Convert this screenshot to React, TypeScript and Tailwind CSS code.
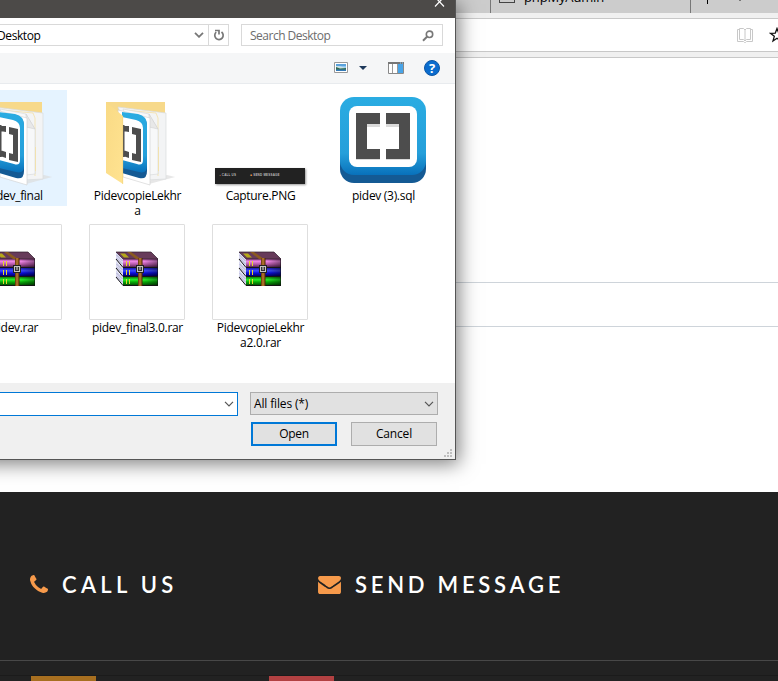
import React from "react";

function BracketShape() {
  return (
    <>
      <rect x="0" y="8" width="86" height="78" rx="14" fill="#145a94" />
      <rect x="0" y="0" width="86" height="78" rx="14" fill="url(#blueFace)" />
      <rect x="9" y="9" width="68" height="61" rx="8" fill="#fff" />
      <path d="M16 19h24v11H27v22h13v11H16zM46 19h24v44H46V52h13V30H46z" fill="#bbb" opacity=".55" />
      <path d="M16 16h24v11H27v25h13v10H16zM46 16h24v46H46V52h13V27H46z" fill="#4d4d4d" />
    </>
  );
}

function Defs() {
  return (
    <svg className="absolute h-0 w-0" aria-hidden="true">
      <defs>
        <linearGradient id="blueFace" x1="0" y1="0" x2="0" y2="1">
          <stop offset="0" stopColor="#2aace2" />
          <stop offset="0.72" stopColor="#259fda" />
          <stop offset="1" stopColor="#0871bb" />
        </linearGradient>
        <linearGradient id="flap" x1="0" y1="0" x2="1" y2="1">
          <stop offset="0" stopColor="#f9da85" />
          <stop offset="1" stopColor="#ffe391" />
        </linearGradient>
        <linearGradient id="purple" x1="0" y1="0" x2="0" y2="1">
          <stop offset="0" stopColor="#a04c96" />
          <stop offset="0.3" stopColor="#ee86e4" />
          <stop offset="0.65" stopColor="#b458a8" />
          <stop offset="1" stopColor="#5c2656" />
        </linearGradient>
        <linearGradient id="blue" x1="0" y1="0" x2="0" y2="1">
          <stop offset="0" stopColor="#1818b0" />
          <stop offset="0.35" stopColor="#3c4cff" />
          <stop offset="0.6" stopColor="#0c10e0" />
          <stop offset="1" stopColor="#000068" />
        </linearGradient>
        <linearGradient id="green" x1="0" y1="0" x2="0" y2="1">
          <stop offset="0" stopColor="#088008" />
          <stop offset="0.35" stopColor="#28f028" />
          <stop offset="0.6" stopColor="#08b008" />
          <stop offset="1" stopColor="#045404" />
        </linearGradient>
        <linearGradient id="shade" x1="0" y1="0" x2="1" y2="0">
          <stop offset="0" stopColor="#000" stopOpacity="0" />
          <stop offset="0.6" stopColor="#000" stopOpacity="0" />
          <stop offset="1" stopColor="#000" stopOpacity="0.4" />
        </linearGradient>
        <linearGradient id="strap" x1="0" y1="0" x2="1" y2="0">
          <stop offset="0" stopColor="#5a3008" />
          <stop offset="0.45" stopColor="#c08030" />
          <stop offset="1" stopColor="#4a2404" />
        </linearGradient>
      </defs>
    </svg>
  );
}

function FolderIcon() {
  return (
    <svg viewBox="89 92 96 96" className="h-24 w-24 shrink-0">
      <path d="M149 184l26-7-8-2-16 4z" fill="#ddd" opacity=".7" />
      <path d="M106 102h59v66h-59z" fill="#f7d98a" />
      <path d="M118 107l48 6v66l-20 1z" fill="#f3f4f5" stroke="#d9dbdd" strokeWidth=".7" />
      <path d="M124 110l32 3 2 5v58" fill="none" stroke="#f3dc9c" strokeWidth=".7" />
      <path d="M123 109l26 5 9 15v45l-9 1z" fill="#f7f8f9" stroke="#d5d7d9" strokeWidth=".6" />
      <path d="M149 114l9 15-9-2z" fill="#e8e8e8" stroke="#ccc" strokeWidth=".5" />
      <path d="M118 110l32 8v67l-27-8z" fill="#fff" stroke="#cfcfcf" strokeWidth=".6" />
      <path d="M122 113l16 2q9 2 9 11v45q0 9-8 7l-17-5z" fill="#145a94" />
      <path d="M122 112l16 2q9 2 9 11v41q0 8-8 6l-17-4z" fill="url(#blueFace)" />
      <path d="M122 117l14 3q7 2 7 8v32q0 6-6 4l-15-4z" fill="#fff" />
      <path d="M123 125l6 1v6l-6-1zM123 150l6 2v6l-6-2zM123 125h1.500v32H123z" fill="#4d4d4d" />
      <path d="M132 127l9 2v33l-9-2v-7l4 1v-19l-4-1z" fill="#4d4d4d" />
      <path d="M106 102l17 14v68l-17-11z" fill="url(#flap)" />
      <path d="M122.700 116v68" stroke="#f0d27a" strokeWidth=".6" />
      <path d="M158.500 147v24" stroke="#f3dfa4" strokeWidth=".8" />
    </svg>
  );
}

function CaptureIcon() {
  return (
    <div className="flex h-24 w-24 items-end justify-center pb-[4px] pr-px">
      <div className="flex h-4 w-[90px] shrink-0 items-start gap-[14px] whitespace-nowrap bg-[#222] pl-[5px] pt-[5px] font-['Liberation_Sans',sans-serif] text-[3px] font-bold leading-[4px] tracking-[0.2px] text-[#bbb] shadow-[1px_1px_2px_rgba(0,0,0,0.4)]">
        <span><span className="text-[#f59a4b]">▪ </span>CALL US</span>
        <span><span className="text-[#f59a4b]">■ </span>SEND MESSAGE</span>
      </div>
    </div>
  );
}

function SqlIcon() {
  return (
    <svg viewBox="-5 -5 96 96" className="h-24 w-24 shrink-0">
      <BracketShape />
    </svg>
  );
}

function Book({ y, fill }: { y: number; fill: string }) {
  return (
    <g>
      <path d={`M116 ${y - 7}l7 7v8l-7-7z`} fill="#d9d9f2" />
      <path d={`M116.500 ${y - 4}l6 6M116.500 ${y - 1}l6 6`} stroke="#a4a4bc" strokeWidth=".7" />
      <rect x="123" y={y} width="35" height="9" fill="#151515" />
      <rect x="123" y={y} width="34.500" height="8" fill={fill} />
      <rect x="123" y={y} width="35" height="8" fill="url(#shade)" />
      <path d={`M126.500 ${y + 2}v5M129.500 ${y + 2}v5`} stroke="#e6d82c" strokeWidth="1" />
      <path d={`M116 ${y}l7 8.500H158`} stroke="#151515" strokeWidth="1" fill="none" />
    </g>
  );
}

function RarIcon() {
  return (
    <div className="h-24 w-24 shrink-0 rounded-[1px] border border-[#dedede] bg-white">
      <svg viewBox="90 225 94 94" className="h-[94px] w-[94px]">
        <Book y={277} fill="url(#green)" />
        <Book y={268} fill="url(#blue)" />
        <Book y={259} fill="url(#purple)" />
        <path d="M116 252h35l7 7h-35z" fill="#673b5a" stroke="#2f1c2c" strokeWidth=".7" />
        <path d="M120 253.500h5l4 4h-5z" fill="#b5a818" />
        <path d="M127 252h4l10 7h-5z" fill="#8a5a20" />
        <rect x="138" y="258" width="4.500" height="28" fill="url(#strap)" />
        <rect x="136" y="265" width="8" height="8" fill="#222" />
        <rect x="137.500" y="266.500" width="5" height="5" fill="#333" stroke="#c4c4c4" strokeWidth="1" />
        <path d="M140 267v3" stroke="#ddd" strokeWidth="1" />
      </svg>
    </div>
  );
}

function FileTile({ icon, lines, selected }: { icon: React.ReactNode; lines: string[]; selected?: boolean }) {
  return (
    <div className="flex justify-center">
      <div className={`flex w-[106px] flex-col items-center pt-0.5 ${selected ? "h-[116px] bg-[#e5f3ff]" : ""}`}>
        {icon}
        <div className="flex flex-col items-center pl-px">
          {lines.map((line) => (
            <span key={line} className="block h-[15px] text-[12px] leading-[16px] tracking-[-0.300px]">{line}</span>
          ))}
        </div>
      </div>
    </div>
  );
}

function Chevron({ className, width = 1.2 }: { className?: string; width?: number }) {
  return (
    <svg viewBox="0 0 10 6" className={`h-[6px] w-[10px] shrink-0 ${className ?? ""}`} fill="none" stroke="currentColor" strokeWidth={width}>
      <path d="M1 .8l4 4 4-4" />
    </svg>
  );
}

function FileDialog() {
  return (
    <section className="absolute -left-6 top-0 flex h-[460px] w-[480px] flex-col overflow-hidden border-b border-r border-[#555] bg-white pl-6 font-['Open_Sans','Noto_Sans',sans-serif] text-[12px] tracking-[-0.150px] text-black shadow-[3px_4px_18px_rgba(0,0,0,0.5)]">
      <header className="flex h-[18px] shrink-0 justify-end bg-[#4c4a48] pr-[10px]">
        <svg viewBox="0 0 11 11" className="-mt-[3px] h-[11px] w-[11px]" stroke="#fff" strokeWidth="1.200">
          <path d="M1 0l9 9.500M10 0L1 9.500" />
        </svg>
      </header>
      <div className="flex h-[35px] shrink-0 gap-3 pr-3 pt-[6px]">
        <div className="flex h-[22px] w-[229px] items-center border border-l-0 border-[#d9d9d9]">
          <span className="-ml-[3px] flex-1 pt-px tracking-[-0.400px]">Desktop</span>
          <Chevron className="mr-1 text-[#777]" width={1.8} />
          <span className="flex h-full w-5 items-center justify-center border-l border-[#d9d9d9]">
            <svg viewBox="0 0 12 12" className="h-3 w-3" fill="none" stroke="#777" strokeWidth="1.700">
              <path d="M8.500 3a4.200 4.200 0 1 1-5.300.2M2 1.500h4v4" />
            </svg>
          </span>
        </div>
        <div className="flex h-[22px] w-[202px] items-center justify-between border border-[#d9d9d9] pl-2 pr-2 text-[#6d6d6d]">
          <span className="pt-px tracking-[-0.500px]">Search Desktop</span>
          <svg viewBox="0 0 12 12" className="mt-px h-3 w-3" fill="none" stroke="#777">
            <circle cx="7.500" cy="4.300" r="3.200" strokeWidth="1.600" />
            <path d="M5 6.800L1 10.800" strokeWidth="2" />
          </svg>
        </div>
      </div>
      <div className="flex h-[31px] shrink-0 items-center justify-end border-b border-[#e8ebee] bg-[#f5f6f7] pr-[15px]">
        <svg viewBox="0 0 14 11" className="-mt-px h-[11px] w-[14px]">
          <path d="M.5.5h13v10H.5z" fill="#fff" stroke="#999" />
          <path d="M2 2h10v7H2z" fill="#8fc6f2" />
          <path d="M2 2h10v2H2z" fill="#5aa2dc" />
          <path d="M2 4h3l7 2v2H2z" fill="#cbe0e4" />
          <path d="M2 5l4 1.500L12 6v2H2z" fill="#326b50" />
          <path d="M2 7.500h10V9H2z" fill="#347ab7" />
        </svg>
        <svg viewBox="0 0 8 4" className="ml-[11px] mr-px h-1 w-2"><path d="M0 0h8L4 4z" fill="#1e395b" /></svg>
        <svg viewBox="0 0 16 12" className="ml-[20px] h-3 w-4">
          <path d="M.5.5h15v11H.5z" fill="#fff" stroke="#888" />
          <path d="M0 0h16v2H0z" fill="#777" />
          <path d="M9 2h6v9H9z" fill="#48a4e8" />
          <path d="M4.500 2v9M9.500 2v9" stroke="#999" />
          <path d="M12 1h1M14 1h1" stroke="#8cf" />
        </svg>
        <span className="ml-5 flex h-4 w-4 items-center justify-center rounded-full border border-[#0b56a5] bg-[#0a6cce] text-[13px] font-bold leading-none text-white">?</span>
      </div>
      <div className="-ml-12 grid h-[299px] shrink-0 grid-cols-[repeat(4,123px)] grid-rows-[132px_132px] pl-[0.5px] pt-[6px]">
        <FileTile icon={<FolderIcon />} lines={["pidev_final"]} selected />
        <FileTile icon={<FolderIcon />} lines={["PidevcopieLekhr", "a"]} />
        <FileTile icon={<CaptureIcon />} lines={["Capture.PNG"]} />
        <FileTile icon={<SqlIcon />} lines={["pidev (3).sql"]} />
        <FileTile icon={<RarIcon />} lines={["pidev.rar"]} />
        <FileTile icon={<RarIcon />} lines={["pidev_final3.0.rar"]} />
        <FileTile icon={<RarIcon />} lines={["PidevcopieLekhr", "a2.0.rar"]} />
      </div>
      <footer className="-ml-6 flex flex-1 flex-col bg-[#f0f0f0] pl-6 pt-[9px]">
        <div className="flex items-start gap-3">
          <div className="-ml-1 flex h-6 w-[242px] items-center justify-end border border-[#0078d7] bg-white pr-[3px]">
            <Chevron className="text-[#555]" />
          </div>
          <div className="flex h-[23px] w-[188px] items-center justify-between border border-[#adadad] bg-[#e1e1e1] pl-[3px] pr-[3px]">
            <span className="pt-px">All files (*)</span>
            <Chevron className="text-[#555]" />
          </div>
        </div>
        <div className="mt-[6px] flex gap-[14px] pl-[251px]">
          <button className="h-6 w-[86px] border-2 border-[#0078d7] bg-[#e1e1e1] leading-5 tracking-[-0.300px]">Open</button>
          <button className="h-6 w-[86px] border border-[#adadad] bg-[#e1e1e1] leading-[22px]">Cancel</button>
        </div>
        <svg viewBox="0 0 8 8" className="ml-auto mr-[3px] mt-[3px] h-2 w-2 shrink-0" fill="#bfbfbf">
          <path d="M6 0h2v2H6zM3 3h2v2H3zM6 3h2v2H6zM0 6h2v2H0zM3 6h2v2H3zM6 6h2v2H6z" />
        </svg>
      </footer>
    </section>
  );
}

function BrowserChrome() {
  return (
    <>
      <div className="flex h-[13px] overflow-hidden bg-[#ccc] pl-[490px] font-['Open_Sans',sans-serif] text-[13px] text-black">
        <div className="flex w-[201px] border-x border-[#777] pl-2">
          <span className="-mt-[9px] h-3 w-4 border border-[#444]" />
          <span className="-mt-[13px] ml-[9px] leading-5 tracking-[-0.150px]">phpMyAdmin</span>
        </div>
        <span className="ml-4 h-1 w-px bg-black" />
        <span className="ml-[31px] h-px w-[2px] bg-[#777]" />
      </div>
      <div className="h-[45px] border-b border-[#c8c8c8] bg-[#f0f0f0] pt-[5px]">
        <div className="flex h-[34px] items-center justify-end overflow-hidden border-y border-[#c8c8c8] bg-white">
          <svg viewBox="0 0 16 15" className="mt-px h-[15px] w-4 shrink-0" fill="none" stroke="#c8c8c8">
            <path d="M2.500 1.500H.5v12h6l1 1h1l1-1h6v-12h-2M2.500.5h4L8 2 9.500.5h4v11h-4L8 13l-1.500-1.500h-4zM8 2v11" />
          </svg>
          <svg viewBox="0 0 16 16" className="-mr-[7px] ml-[16px] h-4 w-4 shrink-0" fill="none" stroke="#111" strokeWidth="1.300">
            <path d="M8 1.500l1.700 4.600 4.800.2-3.800 3 1.300 4.700L8 11.300 4 14l1.300-4.700-3.800-3 4.800-.2z" />
          </svg>
        </div>
      </div>
    </>
  );
}

function PhoneIcon() {
  return (
    <svg viewBox="192 128 1408 1408" className="mr-[14px] h-[18px] w-[18px] shrink-0" fill="#f79a4b">
      <path d="M1600 1240q0 27-10 70.500t-21 68.500q-21 50-122 106-94 51-186 51-27 0-53-3.500t-57.500-12.500-47-14.500-55.500-20.500-49-18q-98-35-175-83-127-79-264-216t-216-264q-48-77-83-175-3-9-18-49t-20.500-55.500-14.500-47-12.500-57.500-3.500-53q0-92 51-186 56-101 106-122 25-11 68.500-21t70.500-10q14 0 21 3 18 6 53 76 11 19 30 54t35 63.500 31 53.500q3 4 17.500 25t21.500 35.500 7 28.500q0 20-28.500 50t-62 55-62 53-28.500 46q0 9 5 22.500t8.500 20.500 14 24 11.500 19q76 137 174 235t235 174q2 1 19 11.500t24 14 20.500 8.500 22.500 5q18 0 46-28.500t53-62 55-62 50-28.500q14 0 28.500 7t35.500 21.500 25 17.500q25 15 53.500 31t63.500 35 54 30q70 35 76 53 3 7 3 21z" />
    </svg>
  );
}

function EnvelopeIcon() {
  return (
    <svg viewBox="0 256 1792 1408" className="mr-[14px] mt-[2px] h-[18px] w-[23px] shrink-0" fill="#f79a4b">
      <path d="M1792 710v794q0 66-47 113t-113 47h-1472q-66 0-113-47t-47-113v-794q44 49 101 87 362 246 497 345 57 42 92.500 65.500t94.500 48 110 24.500h2q51 0 110-24.500t94.500-48 92.500-65.500q170-123 498-345 57-39 100-87zm0-294q0 79-49 151t-122 123q-376 261-468 325-10 7-42.500 31t-54 38.500-52 32.500-57.500 27-50 9h-2q-23 0-50-9t-57.500-27-52-32.500-54-38.500-42.500-31q-91-64-262-182.500t-205-142.500q-62-42-117-115.500t-55-136.500q0-78 41.500-130t118.500-52h1472q65 0 112.500 47t47.500 113z" />
    </svg>
  );
}

export default function App() {
  return (
    <div className="relative flex h-[681px] w-[778px] flex-col overflow-hidden bg-white">
      <Defs />
      <BrowserChrome />
      <main className="h-[434px] shrink-0 pt-[224px]">
        <div className="h-[45px] border-y border-[#ced4da]" />
      </main>
      <footer className="flex-1 bg-[#222] font-['Lato',sans-serif] text-[22px] text-white">
        <div className="flex h-[169px] items-start border-b border-[#484848] pt-[77px]">
          <h2 className="flex h-[30px] w-[288px] items-center pl-[30px] font-semibold tracking-[4.300px]">
            <PhoneIcon />
            CALL US
          </h2>
          <h2 className="flex h-[30px] items-center whitespace-nowrap pl-[30px] font-semibold tracking-[3.750px]">
            <EnvelopeIcon />
            SEND MESSAGE
          </h2>
        </div>
        <div className="mt-[14px] flex h-[6px] gap-[173px] border-t border-[#1b1b1b] pl-[31px]">
          <span className="w-[65px] bg-[#a76f20]" />
          <span className="w-[65px] bg-[#b24142]" />
        </div>
      </footer>
      <FileDialog />
    </div>
  );
}
